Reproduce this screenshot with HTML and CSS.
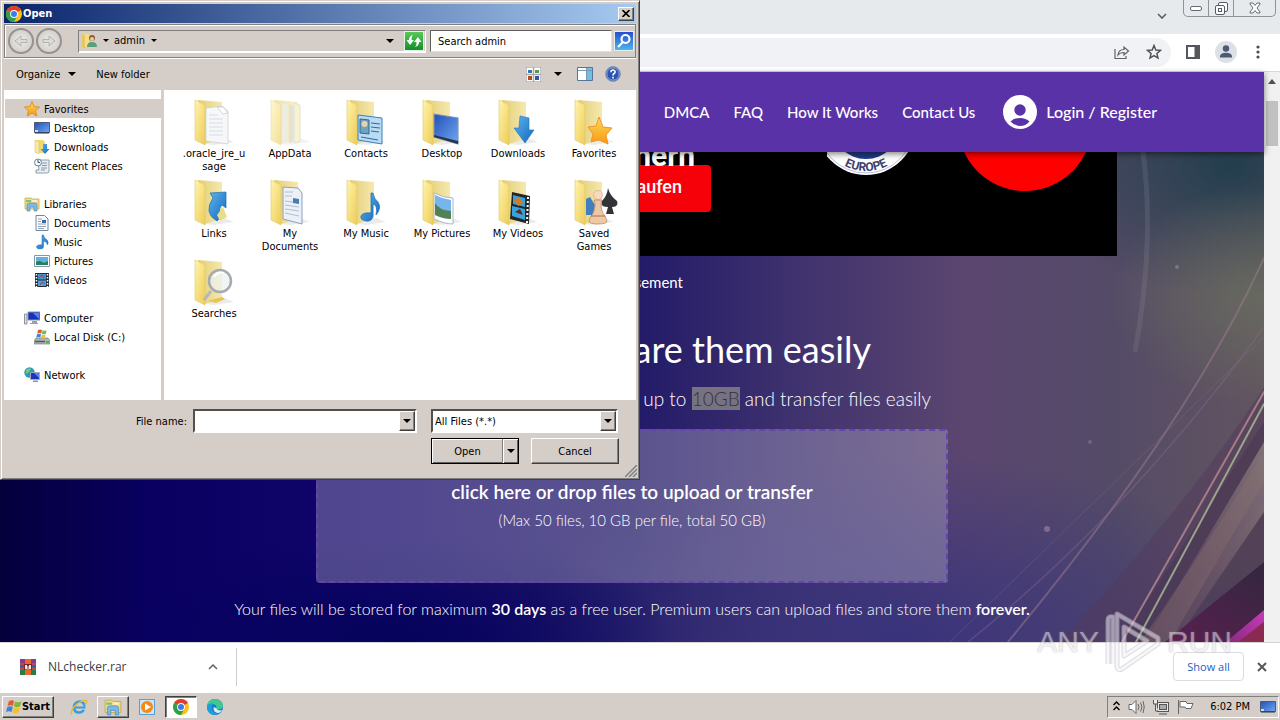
FILE: index.html
```html
<!DOCTYPE html>
<html lang="en">
<head>
<meta charset="utf-8">
<title>File upload</title>
<link rel="stylesheet" href="styles.css">
</head>
<body>
<svg class="defs" aria-hidden="true">
  <defs>
    <linearGradient id="gFlap" x1="0" x2="1" y1="0" y2="1"><stop offset="0" stop-color="#fff3b4"/><stop offset=".5" stop-color="#f7e07f"/><stop offset="1" stop-color="#eccb5c"/></linearGradient>
    <linearGradient id="gBack" x1="0" x2="1"><stop offset="0" stop-color="#e2cd78"/><stop offset="1" stop-color="#f6e9ae"/></linearGradient>
    <linearGradient id="gBlue" x1="0" x2="1" y1="0" y2="1"><stop offset="0" stop-color="#5fb4ee"/><stop offset="1" stop-color="#1268bc"/></linearGradient>
    <linearGradient id="gScreen" x1="0" x2="1" y1="0" y2="1"><stop offset="0" stop-color="#2350b8"/><stop offset="1" stop-color="#6fa8f2"/></linearGradient>
    <linearGradient id="gStar" x1="0" x2="0" y1="0" y2="1"><stop offset="0" stop-color="#ffd95a"/><stop offset="1" stop-color="#f59a12"/></linearGradient>
    <symbol id="folder" viewBox="0 0 48 48">
      <path d="M15 46 34 40 44 44 24 47z" fill="#000" opacity=".08"/>
      <path d="M8 2 32 4V41L15 46z" fill="url(#gBack)"/>
      <path d="M5 2 15 7V47L5 42z" fill="url(#gFlap)" stroke="#e3c765" stroke-width=".6"/>
    </symbol>
    <symbol id="chrome" viewBox="0 0 16 16">
      <circle cx="8" cy="8" r="8" fill="#fbc116"/>
      <path d="M8 8 1.100 4A8 8 0 0 1 14.900 4z" fill="#e33b2e"/>
      <path d="M1.100 4A8 8 0 0 0 8 16L11.400 10 8 8z" fill="#2da04b"/>
      <circle cx="8" cy="8" r="3.900" fill="#fff"/><circle cx="8" cy="8" r="3" fill="#3c7ce8"/>
    </symbol>
    <symbol id="down" viewBox="0 0 8 4"><path d="M0 0h8L4 4z"/></symbol>
    <symbol id="explorer" viewBox="0 0 16 16">
      <path d="M1 2h6l1 1h7v10H1z" fill="#f3dc82" stroke="#c9a94e" stroke-width=".8"/>
      <path d="M2 4h5v2H2z" fill="#7cc576"/><path d="M8 4h5v2H8z" fill="#f5f0cf"/>
      <path d="M3 15V9q0-2 2-2h6q2 0 2 2v6h-3v-4H6v4z" fill="#7fb9e2" stroke="#4d8fc4" stroke-width=".7"/>
    </symbol>
    <symbol id="star" viewBox="0 0 16 16"><path d="M8 .5 10.200 5.600 15.600 6 11.600 9.600 12.800 15 8 12.200 3.200 15 4.400 9.600.4 6 5.800 5.600z" fill="url(#gStar)" stroke="#d8861c" stroke-width=".8"/></symbol>
    <symbol id="monitor" viewBox="0 0 16 16"><path d="M.5 2.500h15v10H.5z" fill="url(#gScreen)" stroke="#4c5d77"/><path d="M1 12.500h14v1H1z" fill="#29303c"/><path d="M1 10h3v2H1z" fill="#c8dcf2"/></symbol>
    <symbol id="note" viewBox="0 0 16 16"><path d="M8 1h1.500Q10 4 13 6q2 2 .5 5 0-3-4-4v5.500Q9.500 15 6 15q-3.500 0-3.500-2.200Q3 10.500 8 10.800z" fill="url(#gBlue)" stroke="#1b6fb8" stroke-width=".5"/></symbol>
  </defs>
</svg>

<main class="browser">
  <div class="tabstrip">
    <button class="bare tabsearch" aria-label="Search tabs"><svg width="10" height="6" viewBox="0 0 10 6"><path d="M1 1l4 4 4-4" fill="none" stroke="#5a5e63" stroke-width="1.600"/></svg></button>
    <div class="winctl">
      <button aria-label="Minimize"><svg width="12" height="5" viewBox="0 0 12 5"><rect x=".5" y=".5" width="11" height="4" rx="1.500" fill="#fff" stroke="#666b75"/></svg></button>
      <button aria-label="Restore"><svg width="13" height="13" viewBox="0 0 13 13" fill="#fff" stroke="#555b66"><rect x="3.500" y=".5" width="9" height="9" rx="1.500"/><rect x=".5" y="3.500" width="9" height="9" rx="1.500"/><rect x="3.500" y="6.500" width="3" height="3"/></svg></button>
      <button class="wide" aria-label="Close"><svg width="12" height="12" viewBox="0 0 12 12"><path d="M1 1h3l2 2.500L8 1h3v1L8 6l3 4v1H8L6 8.500 4 11H1v-1l3-4-3-4z" fill="#fff" stroke="#666b75"/></svg></button>
    </div>
  </div>
  <div class="toolbar">
    <div class="omnibox">
      <button class="bare" aria-label="Share"><svg width="16" height="16" viewBox="0 0 16 16" fill="none" stroke="#5f6368" stroke-width="1.200"><path d="M1 5v9.500h11V12"/><path d="M4 11q.5-5.500 6-5.500V3l4.500 4-4.500 4V8.500Q6 8.500 4 11z"/></svg></button>
      <button class="bare" aria-label="Bookmark"><svg width="16" height="16" viewBox="0 0 16 16"><path d="M8 1.500 9.800 6l4.700.4-3.600 3 1.100 4.700L8 11.600 4 14.100l1.100-4.700-3.600-3L6.200 6z" fill="none" stroke="#4a4e52" stroke-width="1.400"/></svg></button>
    </div>
    <button class="bare" aria-label="Side panel"><svg width="14" height="14" viewBox="0 0 14 14"><path d="M1 1h12v12H1z" fill="#fff" stroke="#54585c" stroke-width="2"/><path d="M8.500 1H13v12H8.500z" fill="#54585c"/></svg></button>
    <button class="bare" aria-label="Profile"><svg width="22" height="22" viewBox="0 0 22 22"><circle cx="11" cy="11" r="11" fill="#dde1e6"/><circle cx="11" cy="7.500" r="3.200" fill="#4c5a75"/><path d="M5 16.500v-1.800Q6 11.800 11 11.800t6 2.900v1.800z" fill="#4c5a75"/></svg></button>
    <button class="bare" aria-label="Menu"><svg width="4" height="14" viewBox="0 0 4 14" fill="#4a4e52"><circle cx="2" cy="2" r="1.600"/><circle cx="2" cy="7" r="1.600"/><circle cx="2" cy="12" r="1.600"/></svg></button>
  </div>

  <div class="viewport">
    <div class="site">
      <header class="nav">
        <a href="#">DMCA</a><a href="#">FAQ</a><a href="#">How It Works</a><a href="#">Contact Us</a>
        <a class="login" href="#"><svg width="34" height="34" viewBox="0 0 34 34"><circle cx="17" cy="17" r="17" fill="#fff"/><circle cx="17" cy="15" r="5.700" fill="#5a32a8"/><path d="M7.500 26.500Q11 23 17 23t9.500 3.500Q22.500 31 17 31t-9.500-4.500z" fill="#5a32a8"/></svg>Login / Register</a>
      </header>
      <div class="hero">
        <svg class="backdrop" viewBox="0 0 1264 490" preserveAspectRatio="none" aria-hidden="true">
          <defs>
            <linearGradient id="bBase" x1="0" x2="1"><stop offset="0" stop-color="#04003c"/><stop offset=".12" stop-color="#090061"/><stop offset=".3" stop-color="#12056c"/><stop offset=".5" stop-color="#211a68"/><stop offset=".62" stop-color="#3d306e"/><stop offset=".76" stop-color="#5b4670"/><stop offset=".88" stop-color="#544b67"/><stop offset="1" stop-color="#62545f"/></linearGradient>
            <radialGradient id="bTeal"><stop offset="0" stop-color="#223e4e"/><stop offset="1" stop-color="#223e4e" stop-opacity="0"/></radialGradient>
            <radialGradient id="bGreen"><stop offset="0" stop-color="#69705f"/><stop offset="1" stop-color="#69705f" stop-opacity="0"/></radialGradient>
            <radialGradient id="bBlue"><stop offset="0" stop-color="#38337c"/><stop offset="1" stop-color="#38337c" stop-opacity="0"/></radialGradient>
            <radialGradient id="bNight"><stop offset="0" stop-color="#04035a"/><stop offset="1" stop-color="#04035a" stop-opacity="0"/></radialGradient>
            <linearGradient id="bFan" x1="1" x2="0" y1="0" y2="1"><stop offset="0" stop-color="#b0a69c" stop-opacity=".5"/><stop offset="1" stop-color="#7a5064" stop-opacity=".2"/></linearGradient>
            <linearGradient id="bPink" x1="0" x2="1" y1="1" y2="0"><stop offset="0" stop-color="#8a2a80"/><stop offset="1" stop-color="#c63bb8"/></linearGradient>
            <linearGradient id="bDark" x1="0" x2="1" y1="1" y2="0"><stop offset="0" stop-color="#5a1f50"/><stop offset="1" stop-color="#33273f"/></linearGradient>
          </defs>
          <rect width="1264" height="490" fill="url(#bBase)"/>
          <ellipse cx="1230" cy="15" rx="200" ry="130" fill="url(#bTeal)"/>
          <ellipse cx="1260" cy="145" rx="150" ry="110" fill="url(#bGreen)" opacity=".75"/>
          <ellipse cx="900" cy="490" rx="380" ry="190" fill="url(#bBlue)"/>
          <ellipse cx="400" cy="490" rx="280" ry="110" fill="url(#bNight)"/>
          <path d="M1143 0q12 90-8 200" fill="none" stroke="#8f92a0" stroke-width="5" opacity=".2"/>
          <path d="M1264 235Q1190 350 1060 490H1150L1264 350z" fill="#52395c" opacity=".5"/>
          <path d="M1264 270 1120 490h144z" fill="#4a3752" opacity=".6"/>
          <path d="M1264 290 1145 490h30L1264 360z" fill="url(#bFan)"/>
          <path d="M1264 330Q1225 395 1170 490h-30Q1210 390 1264 300z" fill="#8e7770" opacity=".3"/>
          <path d="M1264 410 1165 490h99z" fill="url(#bDark)"/>
          <path d="M1264 470 1236 490h28z" fill="#8b2a50"/>
          <path d="M1264 458 1226 490h12L1264 470z" fill="url(#bPink)"/>
          <g fill="none" stroke-linecap="round">
            <path d="M1264 240 1122 490" stroke="#c08d96" stroke-width="2" opacity=".75"/>
            <path d="M1264 252 1136 490" stroke="#b3c69b" stroke-width="2" opacity=".75"/>
            <path d="M1264 106Q1190 270 1008 490" stroke="#9c7b94" stroke-width="2" opacity=".5"/>
            <path d="M1264 175Q1130 360 968 490" stroke="#8b6a90" stroke-width="1.500" opacity=".4"/>
            <path d="M950 490 1264 185" stroke="#9583a1" opacity=".25"/>
          </g>
          <circle cx="1047" cy="377" r="3" fill="#b394a8" opacity=".5"/><circle cx="1177" cy="115" r="2" fill="#aaa" opacity=".4"/><circle cx="1090" cy="290" r="2" fill="#aaa" opacity=".3"/>
        </svg>
        <div class="content">
          <div class="ad">
            <div class="pitch"><strong>sichern</strong><button>Jetzt kaufen</button></div>
            <svg class="badges" viewBox="0 0 290 104" role="img" aria-label="Europe seal">
              <defs><path id="arc" d="M-7-27a46 46 0 0 0 92 0"/></defs>
              <circle cx="39" cy="-27" r="50" fill="#fff"/><circle cx="39" cy="-27" r="48" fill="none" stroke="#b9bde4"/><circle cx="39" cy="-27" r="34" fill="#213a86"/>
              <text class="seal" text-anchor="middle"><textPath href="#arc" startOffset="50%">EUROPE</textPath></text>
              <circle cx="198" cy="-28" r="67" fill="#f00"/>
            </svg>
          </div>
          <p class="adnote">Advertisement</p>
          <h1>share them easily</h1>
          <p class="lead">up to <mark>10GB</mark> and transfer files easily</p>
          <button class="drop"><b>click here or drop files to upload or transfer</b><span>(Max 50 files, 10 GB per file, total 50 GB)</span></button>
          <p class="terms">Your files will be stored for maximum <b>30 days</b> as a free user. Premium users can upload files and store them <b>forever.</b></p>
        </div>
      </div>
    </div>
    <div class="scroll" aria-hidden="true"><svg width="8" height="5" viewBox="0 0 8 5"><path d="M0 5 4 0l4 5z" fill="#505050"/></svg><i></i></div>
  </div>

  <footer class="downloads">
    <div class="file">
      <svg width="16" height="16" viewBox="0 0 16 16"><path d="M0 0h16v5H0z" fill="#8d3a86"/><path d="M0 5h16v5H0z" fill="#2f62b8"/><path d="M0 10h16v6H0z" fill="#2a7d3d"/><path d="M5 0h6v16H5z" fill="#e8682e"/><path d="M4 5h8v6H4z" fill="#7c2424"/><path d="M5.500 6v4h1V6m3 0v4h1V6M8 7v4" fill="none" stroke="#f3ead8"/><path d="M0 5h4m8 0h4M0 10h4m8 0h4" stroke="#e64435" stroke-width="1.500"/></svg>
      <span>NLchecker.rar</span>
      <button class="bare" aria-label="File actions"><svg width="10" height="6" viewBox="0 0 10 6"><path d="M1 5l4-4 4 4" fill="none" stroke="#5f6368" stroke-width="1.500"/></svg></button>
    </div>
    <button class="showall">Show all</button>
    <button class="bare" aria-label="Close downloads"><svg width="10" height="10" viewBox="0 0 10 10"><path d="M1 1l8 8M9 1 1 9" stroke="#54585c" stroke-width="2"/></svg></button>
  </footer>
</main>

<footer class="taskbar">
  <button class="start"><svg width="16" height="16" viewBox="0 0 16 16"><path d="M3 2q3-1.500 5 0L7 7Q4.500 5.500 1.500 7z" fill="#e8592b"/><path d="M9 2.500q3 1.500 6.500 0L14 7.500q-3 1.300-6 0z" fill="#7bb938"/><path d="M1.300 8Q4.500 6.500 6.800 8L5.500 13Q3 11.600 0 13z" fill="#3c85d4"/><path d="M7.800 8.500q3 1.500 6 0l-1.300 5q-3 1.300-6 0z" fill="#f5bf2e"/></svg>Start</button>
  <button class="task" aria-label="Internet Explorer"><svg width="18" height="18" viewBox="0 0 18 18" fill="none"><path d="M14 6.500Q13 3.500 9.500 3.500 4 4 4 9.500q0 5 5.200 5 3.300 0 4.600-2.700" stroke="#36a0dc" stroke-width="2.600"/><path d="M4 9.500h10.500q0-2-.6-3.200" stroke="#36a0dc" stroke-width="2"/><path d="M1.500 16.500Q.5 12 6 7T16.500 2.500q.8 2-1 4" stroke="#efb62c" stroke-width="1.400"/></svg></button>
  <button class="task raised" aria-label="Explorer"><svg width="18" height="18"><use href="#explorer"/></svg></button>
  <button class="task" aria-label="Media Player"><svg width="16" height="16" viewBox="0 0 16 16"><rect x=".5" y=".5" width="15" height="15" fill="#cde4f5" stroke="#5ba0d2"/><circle cx="8" cy="8" r="6" fill="#f28a1c"/><path d="M6 4.500v7l6-3.500z" fill="#fff"/></svg></button>
  <button class="task pressed" aria-label="Chrome"><svg width="16" height="16"><use href="#chrome"/></svg></button>
  <button class="task" aria-label="Edge"><svg width="16" height="16" viewBox="0 0 16 16"><circle cx="8" cy="8" r="8" fill="#1677cf"/><path d="M0 7Q1 0 8 0q7.500.5 8 6.500 0 4-5 4-2.500 0-2-1.500 1-1 0-2.500Q5 3 0 7z" fill="#3fc88f"/><path d="M0 7Q3 3.500 6.500 5 4 7 5 10.500 7 15 12 14.500 8 17 4 15-.3 12.500 0 7z" fill="#1b9de0"/><path d="M9 9q1.500 3.500 6 2-1 2-3 3Q6 14 6.500 8z" fill="#fff" opacity=".85"/></svg></button>
  <div class="tray">
    <svg width="7" height="11" viewBox="0 0 7 11" fill="none" stroke="#000" stroke-width="1.400"><path d="M.5 4 3.500 1l3 3M.5 9l3-3 3 3"/></svg>
    <svg width="17" height="16" viewBox="0 0 17 16" fill="#fff" stroke="#666"><path d="M1 5.500h3L8 1.500v13l-4-4H1z"/><path d="M10 5q2 3 0 6M12.500 3.500q3 4.500 0 9M15 2q2.500 6 0 12" fill="none"/></svg>
    <svg width="16" height="16" viewBox="0 0 16 16" fill="#e9e9e9" stroke="#555"><rect x="4.500" y="3.500" width="11" height="9"/><rect x="6.500" y="5.500" width="7" height="5" fill="#aaa"/><path d="M6 15h8M.5 1v4h4V1M2.500 5v7h3"/></svg>
    <svg width="17" height="16" viewBox="0 0 17 16" fill="#fff" stroke="#666"><path d="M1.500 1v14M3 2.500h6l1 2h6l-2 5H9l-1-1.500H3z"/></svg>
    <time>6:02 PM</time>
    <svg width="16" height="16"><use href="#monitor"/></svg>
  </div>
</footer>

<div class="watermark" aria-hidden="true"><span>ANY</span><svg width="56" height="64" viewBox="0 0 56 64" fill="none" stroke-linejoin="round"><g stroke="#c3bcc8" stroke-width="5"><path d="M3 54V10q0-4 5-3v47"/><path d="M12 4 53 28v6L17 59q-4 2-5-2z"/><path d="M19 17 42 31 19 46z"/></g><g stroke="#f0edf3" stroke-width="3"><path d="M3 54V10q0-4 5-3v47"/><path d="M12 4 53 28v6L17 59q-4 2-5-2z"/><path d="M19 17 42 31 19 46z"/></g></svg><span>RUN</span></div>

<section class="dialog" role="dialog" aria-label="Open">
  <div class="title"><svg width="16" height="16"><use href="#chrome"/></svg><strong>Open</strong><button class="btn3 x" aria-label="Close"><svg width="8" height="7" viewBox="0 0 8 7"><path d="M.5 0l7 7M7.500 0l-7 7" stroke="#000" stroke-width="1.600"/></svg></button></div>
  <div class="addressbar">
    <div class="travel">
      <button aria-label="Back"><svg width="14" height="12" viewBox="0 0 14 12"><path d="M13 4.500H7V1L1 6l6 5V7.500h6z" fill="#dedcd8" stroke="#b5b2ae"/></svg></button>
      <button aria-label="Forward"><svg width="14" height="12" viewBox="0 0 14 12"><path d="M1 4.500h6V1l6 5-6 5V7.500H1z" fill="#dedcd8" stroke="#b5b2ae"/></svg></button>
    </div>
    <div class="path">
      <svg width="16" height="16" viewBox="0 0 16 16"><path d="M1 1h7v13H1z" fill="#f5df84"/><path d="M1 1l3 1v14l-3-2z" fill="#e4c763"/><circle cx="11" cy="5" r="3" fill="#8a5a3a"/><circle cx="11" cy="6" r="2" fill="#f0c9a0"/><path d="M6 14q0-5 5-5t5 5z" fill="#57a07c"/></svg>
      <svg class="arr" width="6" height="3"><use href="#down"/></svg><span>admin</span><svg class="arr" width="6" height="3"><use href="#down"/></svg>
      <button class="bare end" aria-label="Previous locations"><svg width="8" height="4"><use href="#down"/></svg></button>
      <button class="sq green" aria-label="Refresh"><svg width="16" height="14" viewBox="0 0 16 14" fill="#fff"><path d="M7 1Q5 3 5.500 6H8l-4 5-3.500-5H3Q3 2 7 1z"/><path d="M9 13q2-2 1.500-5H8l4-5 3.500 5H13q0 4-4 5z"/></svg></button>
    </div>
    <input class="search" aria-label="Search" value="Search admin">
    <button class="sq blue" aria-label="Search"><svg width="16" height="16" viewBox="0 0 16 16" fill="none" stroke="#fff" stroke-width="2.200"><circle cx="9.500" cy="6" r="4"/><path d="M6.500 9.500 2 14"/></svg></button>
  </div>
  <div class="commands">
    <button class="bare org">Organize <svg width="8" height="4"><use href="#down"/></svg></button>
    <button class="bare">New folder</button>
    <button class="bare end" aria-label="View"><svg width="15" height="15" viewBox="0 0 15 15"><path d="M0 0h15v15H0z" fill="#fff" stroke="#8b8b96"/><path d="M7.500 0v15M0 7.500h15" stroke="#aaa" stroke-width="1.500"/><path d="M2 3h4v3H2z" fill="#3776a8"/><path d="M9 3h4v3H9z" fill="#5a955a"/><path d="M2 9h4v4H2z" fill="#b34c23"/><path d="M9 9h4v4H9z" fill="#2d57a8"/></svg></button>
    <button class="bare" aria-label="More views"><svg width="8" height="4"><use href="#down"/></svg></button>
    <button class="bare pane" aria-label="Preview pane"><svg width="16" height="14" viewBox="0 0 16 14"><path d="M.5.5h15v13H.5z" fill="#fff" stroke="#55759c"/><path d="M10 1h5v12h-5z" fill="#6fc0de"/><path d="M1 3.500h14M9.500 1v12" stroke="#7c98b8"/></svg></button>
    <button class="bare" aria-label="Help"><svg width="16" height="16" viewBox="0 0 16 16"><circle cx="8" cy="8" r="7.400" fill="#2a53b4" stroke="#8a96b4"/><circle cx="8" cy="8" r="6.200" fill="none" stroke="#b9caec" stroke-width=".7"/><path d="M5.800 6.200Q6 4 8 4t2.200 1.800Q10.200 7 8.800 7.700 8 8.200 8 9.500M8 10.800v1.600" fill="none" stroke="#fff" stroke-width="1.600"/></svg></button>
  </div>
  <div class="panes">
    <nav class="tree">
      <a class="sel" href="#"><svg><use href="#star"/></svg>Favorites</a>
      <a class="sub" href="#"><svg><use href="#monitor"/></svg>Desktop</a>
      <a class="sub" href="#"><svg viewBox="0 0 16 16"><path d="M1 1h8l2 2v11H1z" fill="#f1d877"/><path d="M1 1l4 2v12l-4-2z" fill="#fbe9a2" stroke="#d9bb57" stroke-width=".5"/><path d="M9 5h4v5h2.500L11 15 6.500 10H9z" fill="url(#gBlue)"/></svg>Downloads</a>
      <a class="sub" href="#"><svg viewBox="0 0 16 16"><path d="M4 2h11v11q0 2-2 2H2v-3h3z" fill="#e8eef2" stroke="#788a98" stroke-width=".8"/><path d="M8 5h5M8 7.500h5M7 10h6M7 12h4" stroke="#7f98b0"/><circle cx="4" cy="4.500" r="3.500" fill="#f6f8f9" stroke="#708496"/><path d="M4 2v2.500h2" fill="none" stroke="#456"/></svg>Recent Places</a>
      <a class="top" href="#"><svg><use href="#explorer"/></svg>Libraries</a>
      <a class="sub" href="#"><svg viewBox="0 0 16 16"><path d="M2 .5h8.500L14 4v11.500H2z" fill="#fafbfd" stroke="#7288a0"/><path d="M4 4h4M4 6.500h3M4 9h8M4 11.500h8M4 13.500h6" stroke="#8fa3bb"/><path d="M8 5h4v3H8z" fill="#356ba3"/></svg>Documents</a>
      <a class="sub" href="#"><svg><use href="#note"/></svg>Music</a>
      <a class="sub" href="#"><svg viewBox="0 0 16 16"><path d="M.5 2.500h15v11H.5z" fill="#fff" stroke="#8296ae"/><path d="M2 4h12v8H2z" fill="#5eb4de"/><path d="M2 9q4-2 6 0t6-1v4H2z" fill="#2f7c59"/></svg>Pictures</a>
      <a class="sub" href="#"><svg viewBox="0 0 16 16"><path d="M1 1h14v14H1z" fill="#222b3c"/><path d="M4 2h8v5.500H4z" fill="#4292ca"/><path d="M4 8.500h8V14H4z" fill="#50a3d6"/><path d="M2.500 2v13M13.500 2v13" stroke="#fff" stroke-width="1.500" stroke-dasharray="1.500 1.500"/><path d="M5 6l3-3 2 3M6 13l2-3 3 2" stroke="#923f4e" fill="none"/></svg>Videos</a>
      <a class="top" href="#"><svg viewBox="0 0 16 16"><path d="M4 2h12v8H4z" fill="#1732b4" stroke="#8b93a5"/><path d="M9 3l6 6V3z" fill="#5b7df0"/><path d="M8 11h5v2H8zM6 13h8v1H6z" fill="#98a0ac"/><path d="M.5 4h2.500v10H.5z" fill="#dce0e4" stroke="#8b93a5"/></svg>Computer</a>
      <a class="sub" href="#"><svg viewBox="0 0 16 16"><path d="M2 9h12l2 3v3H0v-3z" fill="#aeb4b9" stroke="#6a7177" stroke-width=".6"/><path d="M1 12.500h10" stroke="#545a60" stroke-width="1.500"/><path d="M12 12h3v2h-3z" fill="#47bd43"/><path d="M4 1q2-1 4 0l-.7 3.500Q5 3.500 3.200 4.500z" fill="#e35c2e"/><path d="M8.600 1.300q2 1 4 0l-.7 3.500q-2 1-4 0z" fill="#79b93c"/><path d="M3 5.200q2-1 4 0L6.300 8.500q-2-1-4 0z" fill="#3b86d2"/><path d="M7.700 5.500q2 1 4 0L11 9q-2 1-4 0z" fill="#f1be31"/></svg>Local Disk (C:)</a>
      <a class="top" href="#"><svg viewBox="0 0 16 16"><circle cx="5.500" cy="5.500" r="5.200" fill="#2a9bbd"/><path d="M2 3q3-3 5-1L5 5l-3 2zM6 7l3 1-2 3z" fill="#79c96d"/><path d="M6.500 5.500h9v7h-9z" fill="#1a35ba" stroke="#a2a9b7"/><path d="M10 6h5v5z" fill="#5c7ef0"/><path d="M9 13.500h5V15H9z" fill="#8c94a2"/></svg>Network</a>
    </nav>
    <ul class="files">
      <li><svg viewBox="0 0 48 48"><use href="#folder"/><path d="M16 10 32 8l6 5v33l-22-3z" fill="#f6f7f9" stroke="#c8ccd2" stroke-width=".7"/><path d="M27 9l6 0 5 6-5 1z" fill="#fff" stroke="#b5bac2" stroke-width=".6"/><path d="M19 17h9M19 21h14M19 25h14M19 29h14M19 33h14M19 37h14" stroke="#d7dbe1"/></svg>.oracle_jre_u<wbr>sage</li>
      <li><svg class="faded" viewBox="0 0 48 48"><use href="#folder"/><path d="M16 5 22 7V44l-6 2z" fill="#e4e2cb"/><path d="M23 6l4 2v36l-4 1z" fill="#d2cfc0"/><path d="M28 5l6 2v36l-6 2z" fill="#f3ebb8" stroke="#d9d0a0"/></svg>AppData</li>
      <li><svg viewBox="0 0 48 48"><use href="#folder"/><path d="M16 17 40 20v26l-24-4z" fill="#b9dcf4" stroke="#3c7fb6"/><path d="M18 21l9 1v14l-9-1z" fill="#6fa3bd" stroke="#356985"/><circle cx="22.500" cy="26" r="3" fill="#e5d2b5"/><path d="M29 25l9 1M29 29l9 1M29 33l8 1M19 39l17 3" stroke="#31689b"/></svg>Contacts</li>
      <li><svg viewBox="0 0 48 48"><use href="#folder"/><path d="M16 16 40 20v26l-24-7z" fill="url(#gScreen)" stroke="#8094ad" stroke-width="1.200"/><path d="M16 37l24 6v3l-24-7z" fill="#27354e"/></svg>Desktop</li>
      <li><svg viewBox="0 0 48 48"><use href="#folder"/><path d="M26 18 35 20V32h5L31 45 20 30h5z" fill="url(#gBlue)" stroke="#1b73bd" stroke-width=".6"/></svg>Downloads</li>
      <li><svg viewBox="0 0 48 48"><use href="#folder"/><path d="M29 19l4 10 9 1-6 7 2 9-9-4-8 2 2-8-5-7 8-1z" fill="url(#gStar)" stroke="#f4932a"/></svg>Favorites</li>
      <li><svg viewBox="0 0 48 48"><use href="#folder"/><path d="M20 15 36 14V30l-4-3q-5 5 0 11l-5 5q-14-8-4-23z" fill="url(#gBlue)" stroke="#1b70ae" stroke-width=".7"/><path d="M27 37l6-8 4 10-7 4z" fill="#e7dd8b"/></svg>Links</li>
      <li><svg viewBox="0 0 48 48"><use href="#folder"/><path d="M17 9 32 10l4 5v31l-19-5z" fill="#edf1f7" stroke="#8ba1be"/><path d="M19 14h8M19 18h7M19 23l14 2M19 27l14 2M19 31l14 2M19 35l14 3" stroke="#b2bdcf"/><path d="M27 20l6 1v5l-6-1z" fill="#4382b0"/></svg>My Documents</li>
      <li><svg viewBox="0 0 48 48"><use href="#folder"/><path d="M29 15h2q1 6 5 9 4 6-2 13 2-10-3-11v12q-1 6-7 5-6-1-5-5 2-4 10-3z" fill="url(#gBlue)" stroke="#1b6db3" stroke-width=".7"/></svg>My Music</li>
      <li><svg viewBox="0 0 48 48"><use href="#folder"/><path d="M16 15q10 5 19 5v26q-8 0-19-5z" fill="#fff" stroke="#aab6c4"/><path d="M17 17q8 4 16 5v13q-8-1-16-5z" fill="#77b5ea"/><path d="M17 25q4 7 16 8v8q-8 0-16-4z" fill="#528158"/></svg>My Pictures</li>
      <li><svg viewBox="0 0 48 48"><use href="#folder"/><path d="M18 14 36 18l-1 28-19-5z" fill="#252525"/><path d="M19 17l12 3v9l-12-3zM18 28l13 3v11l-13-4z" fill="#36a4dc"/><path d="M20 22l5-3 4 6-5 3z" fill="#d47b20"/><path d="M21 34l5-3 3 6z" fill="#5e281c"/><path d="M34 19l-1 26" stroke="#fff" stroke-width="2" stroke-dasharray="2 2"/></svg>My Videos</li>
      <li><svg viewBox="0 0 48 48"><use href="#folder"/><path d="M38 10q2 8 9 13 2 6-5 6l2 7h-8l2-7q-8 0-6-6 5-5 6-13z" fill="#333438"/><path d="M16 21l4-2 5 8-2 10h-7z" fill="#3f7fc0"/><circle cx="28" cy="17" r="4.500" fill="#f6d9bf" stroke="#c99a78" stroke-width=".5"/><path d="M24 22h8l-1 3q0 9 4 13l2 5q0 3-9 3t-9-3l2-5q4-4 4-13z" fill="#ecc8a6" stroke="#b77f56" stroke-width=".7"/><path d="M21 38h14" stroke="#ad6f45"/></svg>Saved Games</li>
      <li><svg viewBox="0 0 48 48"><use href="#folder"/><path d="M21 33l-7 9" stroke="#b4b8bc" stroke-width="3"/><circle cx="30" cy="23" r="11" fill="#eef2f0" fill-opacity=".75" stroke="#a4aaae" stroke-width="2.500"/><path d="M24 19q4-6 10-4" fill="none" stroke="#fff" stroke-width="2"/><path d="M18 43l14-4 3 2-9 4z" fill="#e6c64c"/></svg>Searches</li>
    </ul>
  </div>
  <form class="bottom">
    <label for="fn">File name:</label>
    <div class="sunken combo"><input id="fn" type="text"><button type="button" class="btn3" aria-label="Recent names"><svg width="8" height="4"><use href="#down"/></svg></button></div>
    <div class="sunken kind"><select aria-label="File type"><option>All Files (*.*)</option></select><span class="btn3" aria-hidden="true"><svg width="8" height="4"><use href="#down"/></svg></span></div>
    <div class="actions">
      <div class="split"><button type="button">Open</button><button type="button" aria-label="Open options"><svg width="8" height="4"><use href="#down"/></svg></button></div>
      <button type="button" class="btn3 cancel">Cancel</button>
    </div>
  </form>
  <svg class="grip" width="12" height="12" viewBox="0 0 12 12" stroke="#808080" stroke-width="1.500" aria-hidden="true"><path d="M0 12 12 0M4 12l8-8M8 12l4-4"/></svg>
</section>
</body>
</html>
```
FILE: styles.css
```css
* { box-sizing: border-box; }
body {
  margin: 0;
  height: 100vh;
  display: flex;
  flex-direction: column;
  overflow: hidden;
  font: 11px/13px "DejaVu Sans Condensed", "Noto Sans", sans-serif;
  color: #000;
}
button, input, select { font: inherit; color: inherit; }
button { padding: 0; border: 0; display: flex; align-items: center; justify-content: center; }
a { color: inherit; text-decoration: none; }
svg { flex: none; display: block; }
.defs { position: absolute; width: 0; height: 0; }
.bare { background: none; }
.end { margin-left: auto; }

/* browser chrome */
.browser { flex: 1; min-height: 0; display: flex; flex-direction: column; }
.tabstrip { height: 34px; background: #e7eaed; display: flex; justify-content: flex-end; padding-right: 4px; gap: 16px; }
.tabsearch { height: 32px; }
.winctl { height: 17px; display: flex; border: 1px solid #8d929b; border-top: 0; border-radius: 0 0 5px 5px; }
.winctl button { width: 25px; background: none; border-right: 1px solid #8d929b; }
.winctl .wide { width: 41px; border: 0; }
.toolbar { height: 38px; background: #fff; border-bottom: 1px solid #d5d7da; display: flex; align-items: center; gap: 15px; padding: 0 20px 1px 0; }
.toolbar > .bare:last-child { margin-left: 4px; }
.omnibox { flex: 1; height: 29px; border-radius: 0 15px 15px 0; background: #f0f2f5; display: flex; align-items: center; justify-content: flex-end; gap: 16px; padding-right: 9px; }
.viewport { flex: 1; min-height: 0; display: flex; }
.scroll { width: 16px; background: #f1f1f1; display: flex; flex-direction: column; align-items: center; padding-top: 7px; gap: 17px; }
.scroll i { width: 12px; height: 45px; background: #c1c1c1; }

/* web page */
.site { flex: 1; min-width: 0; display: flex; flex-direction: column; font-family: Lato, sans-serif; color: #fff; }
.nav { height: 80px; flex: none; background: #5a32a8; display: flex; align-items: center; justify-content: flex-end; gap: 24px; padding-right: 107px; font-size: 15px; line-height: 20px; font-weight: 500; box-shadow: 0 2px 6px rgba(0, 0, 0, .5); z-index: 1; }
.login { display: flex; align-items: center; gap: 9px; margin-left: 4px; font-size: 16px; }
.hero { flex: 1; min-height: 0; display: grid; grid-template: minmax(0, 1fr) / minmax(0, 1fr); overflow: hidden; }
.hero > * { grid-area: 1 / 1; }
.backdrop { width: 100%; height: 100%; }
.content { z-index: 0; display: flex; flex-direction: column; align-items: center; }
.content p, .content h1 { margin: 0; }
.ad { width: 970px; max-width: 100%; height: 104px; flex: none; background: #000; display: flex; justify-content: flex-end; font-family: Roboto, sans-serif; overflow: hidden; }
.pitch { width: 164px; margin-right: 116px; }
.pitch strong { display: block; height: 13px; line-height: 8px; font-size: 30px; text-align: right; padding-right: 16px; }
.pitch button { width: 100%; height: 47px; padding: 0 0 4px 6px; background: #f6000a; color: #fff; border-radius: 4px; font-size: 18px; font-weight: 500; }
.badges { width: 290px; height: 104px; }
.seal { font: bold 12px Roboto, sans-serif; fill: #3b3f70; }
.content .adnote { width: 102px; margin-top: 16px; font-size: 15px; line-height: 20px; text-align: right; }
.content h1, .lead { width: 598px; max-width: 100%; text-align: right; white-space: nowrap; }
.content h1 { padding-right: 60px; margin-top: 33px; font-size: 36px; line-height: 48px; font-weight: 400; }
.content .lead { margin-top: 14px; font-size: 19px; line-height: 24px; font-weight: 300; }
mark { background: #77727f; color: #35304a; }
.drop { width: 632px; max-width: 100%; height: 154px; flex: none; margin-top: 18px; flex-direction: column; gap: 8px; color: #fff; background: rgba(184, 178, 205, .38); border: 2px dashed #6544b0; border-radius: 4px; font-size: 15px; line-height: 20px; font-weight: 300; }
.drop b { font-size: 19px; font-weight: 600; }
.content .terms { margin-top: 15px; font-size: 16px; line-height: 22px; font-weight: 300; }
.terms b { font-weight: 600; }

/* downloads shelf */
.downloads { height: 50px; flex: none; background: #fff; border-top: 1px solid #d5d5d5; display: flex; align-items: center; padding: 0 13px 2px 0; gap: 13px; font: 12px/16px "Open Sans", sans-serif; color: #3c4043; }
.file { width: 237px; height: 38px; border-right: 1px solid #c9ccd0; display: flex; align-items: center; gap: 12px; padding: 0 18px 0 20px; margin-right: auto; }
.file button { margin-left: auto; }
.showall { width: 71px; height: 29px; border: 1px solid #dadce0; border-radius: 4px; background: #fff; color: #1a62c6; font-size: 11px; }

/* taskbar */
.taskbar { height: 28px; flex: none; background: #d5cec8; box-shadow: inset 0 1px #fff; display: flex; align-items: center; padding: 1px 1px 0 2px; }
.start { width: 52px; height: 22px; margin-right: 9px; font-weight: bold; background: #d5cec8; border: 1px solid; border-color: #fff #404040 #404040 #fff; box-shadow: inset -1px -1px #808080; }
.task { width: 32px; height: 22px; background: none; margin-right: 2px; border: 1px solid transparent; }
.raised { border-color: #fff #404040 #404040 #fff; box-shadow: inset -1px -1px #808080; }
.pressed { background: #fff; border-color: #404040 #fff #fff #404040; box-shadow: inset 1px 1px #808080; }
.tray { margin-left: auto; height: 22px; border: 1px solid; border-color: #808080 #fff #fff #808080; display: flex; align-items: center; gap: 8px; padding: 0 2px 0 5px; }
.tray time { margin: 0 2px 0 8px; }

/* watermark floats over page and shelf */
.watermark { position: absolute; right: 48px; bottom: 46px; display: flex; align-items: center; gap: 6px; opacity: .55; font: 30px/40px "Liberation Sans", sans-serif; color: #e9e6ec; text-shadow: 0 0 2px #8a8590; pointer-events: none; }

/* file dialog */
.dialog { position: absolute; z-index: 5; left: 0; top: 0; width: 640px; background: #d5cec8; border: 1px solid; border-color: #d5cec8 #404040 #404040 #d5cec8; box-shadow: inset 1px 1px #fff, inset -1px -1px #808080; padding: 3px 3px 0 3px; }
.title { height: 19px; display: flex; align-items: center; padding: 0 2px; gap: 1px; color: #fff; background: linear-gradient(90deg, #0a246a, #a6caf0); }
.btn3 { background: #d5cec8; border: 1px solid; border-color: #fff #404040 #404040 #fff; box-shadow: inset -1px -1px #808080; display: flex; align-items: center; justify-content: center; }
.x { width: 16px; height: 14px; margin-left: auto; }
.addressbar { height: 34px; margin-top: 1px; border: 1px solid #808080; box-shadow: inset 1px 1px #fff, 0 1px #fff; display: flex; align-items: center; padding: 0 1px 0 3px; }
.travel { display: flex; gap: 2px; margin-right: 16px; }
.travel button { width: 26px; height: 26px; border-radius: 50%; border: 2px solid #94918e; background: radial-gradient(#eeedeb, #c9c6c2); }
.path { flex: 1; height: 23px; border: 1px solid; border-color: #808080 #fff #fff #808080; box-shadow: inset 0 -1px #fff; display: flex; align-items: center; gap: 6px; padding: 0 1px 1px 2px; }
.path span { margin-left: -1px; }
.path .end { margin-right: 4px; }
.sq { width: 20px; height: 20px; border: 1px solid #e7f0e7; }
.green { background: linear-gradient(#5cc75a, #12902a); }
.blue { background: linear-gradient(#254fcb, #4fb3f0); margin-left: 2px; }
.search { width: 182px; height: 22px; margin-left: 4px; padding: 0 7px; background: #fff; border: 1px solid; border-color: #606060 #e5e0da #e5e0da #606060; }
.commands { height: 32px; display: flex; align-items: center; padding: 0 15px 0 12px; }
.org { gap: 8px; margin-right: 20px; }
.commands .end { margin-left: auto; margin-right: 13px; }
.pane { margin: 0 12px 0 15px; }
.panes { height: 310px; display: grid; grid-template-columns: 157px minmax(0, 1fr); gap: 3px; }
.panes > * { background: #fff; }
.tree { padding: 9px 0 0 1px; }
.tree a { height: 19px; display: flex; align-items: center; gap: 4px; padding: 1px 0 0 19px; }
.tree svg { width: 16px; height: 16px; }
.tree .sub { padding-left: 29px; }
.tree .sel { background: #d5cec8; }
.tree .top { margin-top: 19px; }
.files { list-style: none; margin: 0; padding: 8px 0 0 12px; display: grid; grid-template-columns: repeat(6, 76px); grid-auto-rows: 80px; align-content: start; }
.files li { padding: 0 4px; text-align: center; }
.files svg { width: 48px; height: 48px; margin: 0 auto 1px; }
.faded { opacity: .6; }
.bottom { height: 79px; display: grid; grid-template-columns: 183px 224px 188px; column-gap: 6px; row-gap: 5px; align-content: start; align-items: center; padding-top: 9px; }
.bottom label { text-align: right; }
.sunken { height: 24px; display: flex; background: #fff; border: 2px solid; border-color: #505050 #fff #fff #505050; }
.sunken input, .sunken select { flex: 1; min-width: 0; border: 0; padding: 0 2px; background: none; appearance: none; outline: 0; }
.sunken .btn3 { width: 16px; }
.kind { margin-left: 8px; margin-right: -7px; }
.actions { grid-column: 3; display: flex; gap: 12px; margin-left: 8px; margin-right: -8px; }
.split { width: 88px; height: 26px; display: flex; border: 1px solid #000; box-shadow: inset 1px 1px #fff, inset -1px -1px #606060; }
.split button { flex: 1; background: none; }
.split button + button { flex: none; width: 15px; border-left: 1px solid #fff; box-shadow: -1px 0 #808080; }
.cancel { width: 88px; height: 26px; }
.grip { position: absolute; right: 2px; bottom: 2px; }
```
